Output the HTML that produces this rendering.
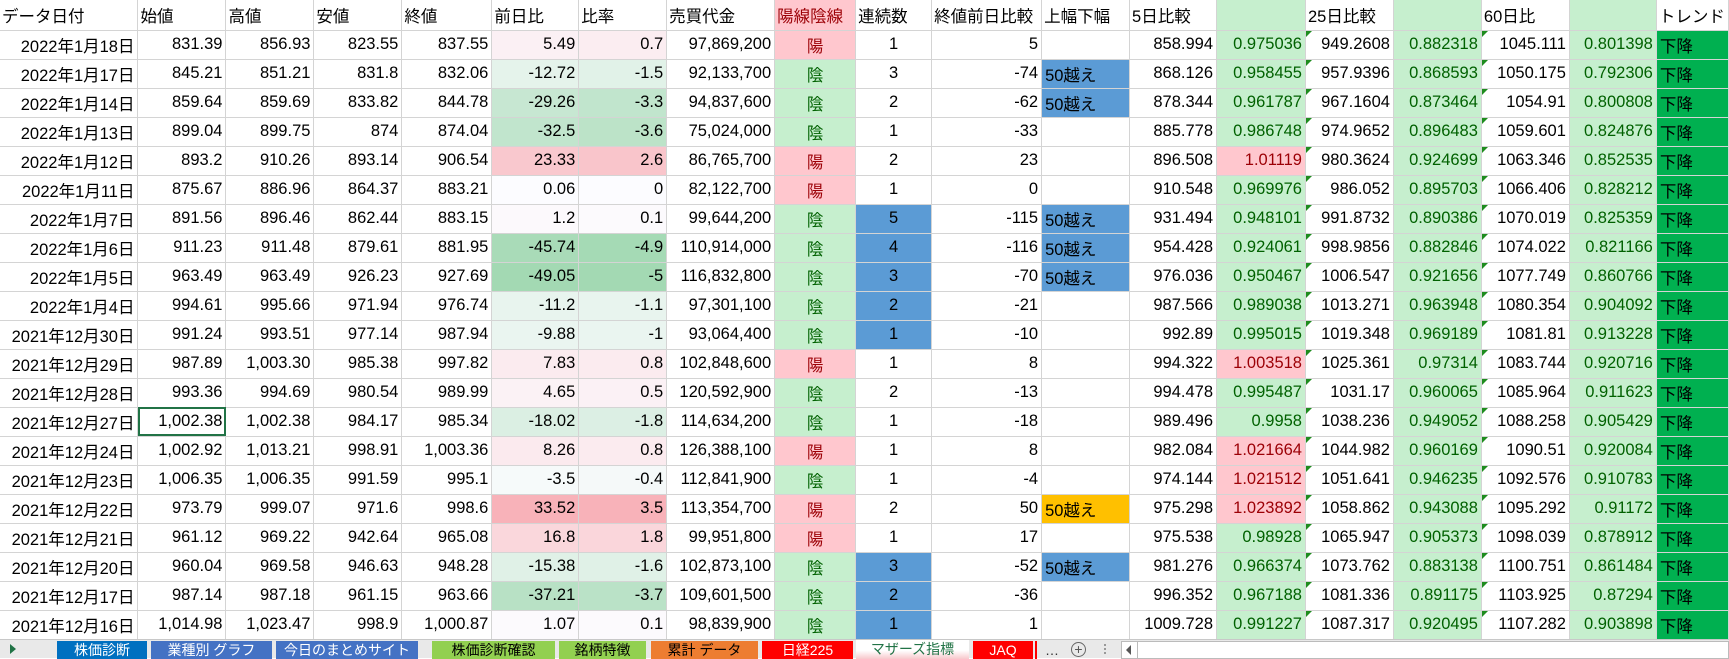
<!DOCTYPE html>
<html><head><meta charset="utf-8">
<style>
*{margin:0;padding:0;box-sizing:border-box}
body{width:1729px;height:658px;overflow:hidden;background:#fff;font-family:"Liberation Sans","Noto Sans CJK JP",sans-serif;font-size:16.5px;color:#000;position:relative}
table{border-collapse:collapse;table-layout:fixed;position:absolute;left:0;top:0}
td{border-right:1px solid #d4d4d4;border-bottom:1px solid #d4d4d4;height:29px;padding:0 3px;text-align:right;white-space:nowrap;overflow:hidden;position:relative}
tr.h td{height:30px;text-align:left;padding-left:2px}
td.l{text-align:left}
td.c{text-align:center}
.tri::before{content:"";position:absolute;left:0;top:0;border-top:6px solid #1e8c1e;border-right:6px solid transparent}
.gr{background:#c6efce;color:#006100}
.pk{background:#ffc7ce;color:#9c0006}
.bl{background:#5b9bd5}
.or{background:#ffc000}
.tr{background:#00b050;text-align:left}
.sel{outline:2px solid #217346;outline-offset:-2px}
#tabs{position:absolute;left:0;top:639px;width:1729px;height:19px;background:#e9e9e9;border-top:1px solid #c8c8c8}
.tab{position:absolute;top:1px;height:18px;font-size:14px;line-height:18px;text-align:center;white-space:nowrap;overflow:hidden}
</style></head><body>
<table id="t"><colgroup id="cg"></colgroup><tbody id="tb"></tbody></table>
<div id="tabs">
<div style="position:absolute;left:10px;top:4px;width:0;height:0;border-left:6px solid #217346;border-top:5px solid transparent;border-bottom:5px solid transparent"></div>
<div class="tab" style="left:57px;width:90px;background:#0070c0;color:#fff">株価診断</div>
<div class="tab" style="left:151px;width:121px;background:#4472c4;color:#fff">業種別 グラフ</div>
<div class="tab" style="left:276px;width:142px;background:#4472c4;color:#fff">今日のまとめサイト</div>
<div class="tab" style="left:432px;width:123px;background:#92d050;color:#000">株価診断確認</div>
<div class="tab" style="left:559px;width:87px;background:#92d050;color:#000">銘柄特徴</div>
<div class="tab" style="left:651px;width:107px;background:#ed7d31;color:#000">累計 データ</div>
<div class="tab" style="left:762px;width:91px;background:#ff0000;color:#fff">日経225</div>
<div class="tab" style="left:856px;width:113px;background:linear-gradient(#fff 55%,#f8c8cc);color:#217346;top:0;height:19px">マザーズ指標</div>
<div class="tab" style="left:973px;width:60px;background:#ff0000;color:#fff">JAQ</div>
<div style="position:absolute;left:1035px;top:1px;width:2px;height:18px;background:#ff0000"></div>
<div class="tab" style="left:1042px;width:20px;color:#333">…</div>
<div style="position:absolute;left:1071px;top:2px;width:15px;height:15px;border:1px solid #666;border-radius:50%;font-size:14px;line-height:12px;text-align:center;color:#555">+</div>
<div style="position:absolute;left:1104px;top:4px;width:2px;height:10px;border-left:2px dotted #999"></div>
<div style="position:absolute;left:1121px;top:1px;width:608px;height:18px;background:#fff;border:1px solid #bbb"></div>
<div style="position:absolute;left:1126px;top:5px;width:0;height:0;border-right:5px solid #555;border-top:5px solid transparent;border-bottom:5px solid transparent"></div>
<div style="position:absolute;left:1137px;top:2px;width:1px;height:16px;background:#bbb"></div>
</div>
<script>
var W=[138,88,88,88,90,87,88,108,81,76,110,88,87,89,88,88,88,87,72];
var cg=document.getElementById('cg');
W.forEach(function(w){var c=document.createElement('col');c.style.width=w+'px';cg.appendChild(c);});
var D=[
["2022年1月18日","831.39","856.93","823.55","837.55",5.49,0.7,"97,869,200","陽",1,5,"","858.994","0.975036","949.2608","0.882318","1045.111","0.801398"],
["2022年1月17日","845.21","851.21","831.8","832.06",-12.72,-1.5,"92,133,700","陰",3,-74,"b","868.126","0.958455","957.9396","0.868593","1050.175","0.792306"],
["2022年1月14日","859.64","859.69","833.82","844.78",-29.26,-3.3,"94,837,600","陰",2,-62,"b","878.344","0.961787","967.1604","0.873464","1054.91","0.800808"],
["2022年1月13日","899.04","899.75","874","874.04",-32.5,-3.6,"75,024,000","陰",1,-33,"","885.778","0.986748","974.9652","0.896483","1059.601","0.824876"],
["2022年1月12日","893.2","910.26","893.14","906.54",23.33,2.6,"86,765,700","陽",2,23,"","896.508","1.01119","980.3624","0.924699","1063.346","0.852535"],
["2022年1月11日","875.67","886.96","864.37","883.21",0.06,0,"82,122,700","陽",1,0,"","910.548","0.969976","986.052","0.895703","1066.406","0.828212"],
["2022年1月7日","891.56","896.46","862.44","883.15",1.2,0.1,"99,644,200","陰",5,-115,"b","931.494","0.948101","991.8732","0.890386","1070.019","0.825359"],
["2022年1月6日","911.23","911.48","879.61","881.95",-45.74,-4.9,"110,914,000","陰",4,-116,"b","954.428","0.924061","998.9856","0.882846","1074.022","0.821166"],
["2022年1月5日","963.49","963.49","926.23","927.69",-49.05,-5,"116,832,800","陰",3,-70,"b","976.036","0.950467","1006.547","0.921656","1077.749","0.860766"],
["2022年1月4日","994.61","995.66","971.94","976.74",-11.2,-1.1,"97,301,100","陰",2,-21,"","987.566","0.989038","1013.271","0.963948","1080.354","0.904092"],
["2021年12月30日","991.24","993.51","977.14","987.94",-9.88,-1,"93,064,400","陰",1,-10,"","992.89","0.995015","1019.348","0.969189","1081.81","0.913228"],
["2021年12月29日","987.89","1,003.30","985.38","997.82",7.83,0.8,"102,848,600","陽",1,8,"","994.322","1.003518","1025.361","0.97314","1083.744","0.920716"],
["2021年12月28日","993.36","994.69","980.54","989.99",4.65,0.5,"120,592,900","陰",2,-13,"","994.478","0.995487","1031.17","0.960065","1085.964","0.911623"],
["2021年12月27日","1,002.38","1,002.38","984.17","985.34",-18.02,-1.8,"114,634,200","陰",1,-18,"","989.496","0.9958","1038.236","0.949052","1088.258","0.905429"],
["2021年12月24日","1,002.92","1,013.21","998.91","1,003.36",8.26,0.8,"126,388,100","陽",1,8,"","982.084","1.021664","1044.982","0.960169","1090.51","0.920084"],
["2021年12月23日","1,006.35","1,006.35","991.59","995.1",-3.5,-0.4,"112,841,900","陰",1,-4,"","974.144","1.021512","1051.641","0.946235","1092.576","0.910783"],
["2021年12月22日","973.79","999.07","971.6","998.6",33.52,3.5,"113,354,700","陽",2,50,"o","975.298","1.023892","1058.862","0.943088","1095.292","0.91172"],
["2021年12月21日","961.12","969.22","942.64","965.08",16.8,1.8,"99,951,800","陽",1,17,"","975.538","0.98928","1065.947","0.905373","1098.039","0.878912"],
["2021年12月20日","960.04","969.58","946.63","948.28",-15.38,-1.6,"102,873,100","陰",3,-52,"b","981.276","0.966374","1073.762","0.883138","1100.751","0.861484"],
["2021年12月17日","987.14","987.18","961.15","963.66",-37.21,-3.7,"109,601,500","陰",2,-36,"","996.352","0.967188","1081.336","0.891175","1103.925","0.87294"],
["2021年12月16日","1,014.98","1,023.47","998.9","1,000.87",1.07,0.1,"98,839,900","陰",1,1,"","1009.728","0.991227","1087.317","0.920495","1107.282","0.903898"]];
var blueRows=[6,7,8,9,10,18,19,20];
function mix(a,b,t){return 'rgb('+[0,1,2].map(function(i){return Math.round(a[i]+(b[i]-a[i])*t)}).join(',')+')'}
var WH=[252,252,255],G=[163,217,179],P=[248,178,185];
function heat(v,mn,mx){if(v<0)return mix(WH,G,Math.min(1,v/mn));return mix(WH,P,Math.min(1,v/mx));}
var h='<tr class="h"><td>データ日付</td><td>始値</td><td>高値</td><td>安値</td><td>終値</td><td>前日比</td><td>比率</td><td>売買代金</td><td class="pk">陽線陰線</td><td>連続数</td><td>終値前日比較</td><td>上幅下幅</td><td>5日比較</td><td class="gr"></td><td>25日比較</td><td class="gr"></td><td>60日比</td><td class="gr"></td><td>トレンド</td></tr>';
D.forEach(function(r,i){
 h+='<tr><td>'+r[0]+'</td>';
 h+='<td'+(i==13?' class="sel"':'')+'>'+r[1]+'</td><td>'+r[2]+'</td><td>'+r[3]+'</td><td>'+r[4]+'</td>';
 h+='<td style="background:'+heat(r[5],-49.05,33.52)+'">'+r[5]+'</td>';
 h+='<td style="background:'+heat(r[6],-5,3.5)+'">'+r[6]+'</td>';
 h+='<td>'+r[7]+'</td>';
 h+='<td class="c '+(r[8]=='陽'?'pk':'gr')+'">'+r[8]+'</td>';
 h+='<td class="c'+(blueRows.indexOf(i)>=0?' bl':'')+'">'+r[9]+'</td>';
 h+='<td>'+r[10]+'</td>';
 h+=r[11]=='b'?'<td class="l bl">50越え</td>':r[11]=='o'?'<td class="l or">50越え</td>':'<td></td>';
 h+='<td>'+r[12]+'</td>';
 h+='<td class="'+(parseFloat(r[13])>1?'pk':'gr')+'">'+r[13]+'</td>';
 h+='<td class="tri">'+r[14]+'</td><td class="gr">'+r[15]+'</td>';
 h+='<td class="tri">'+r[16]+'</td><td class="gr">'+r[17]+'</td>';
 h+='<td class="tr">下降</td></tr>';
});
document.getElementById('tb').innerHTML=h;
</script>
</body></html>
